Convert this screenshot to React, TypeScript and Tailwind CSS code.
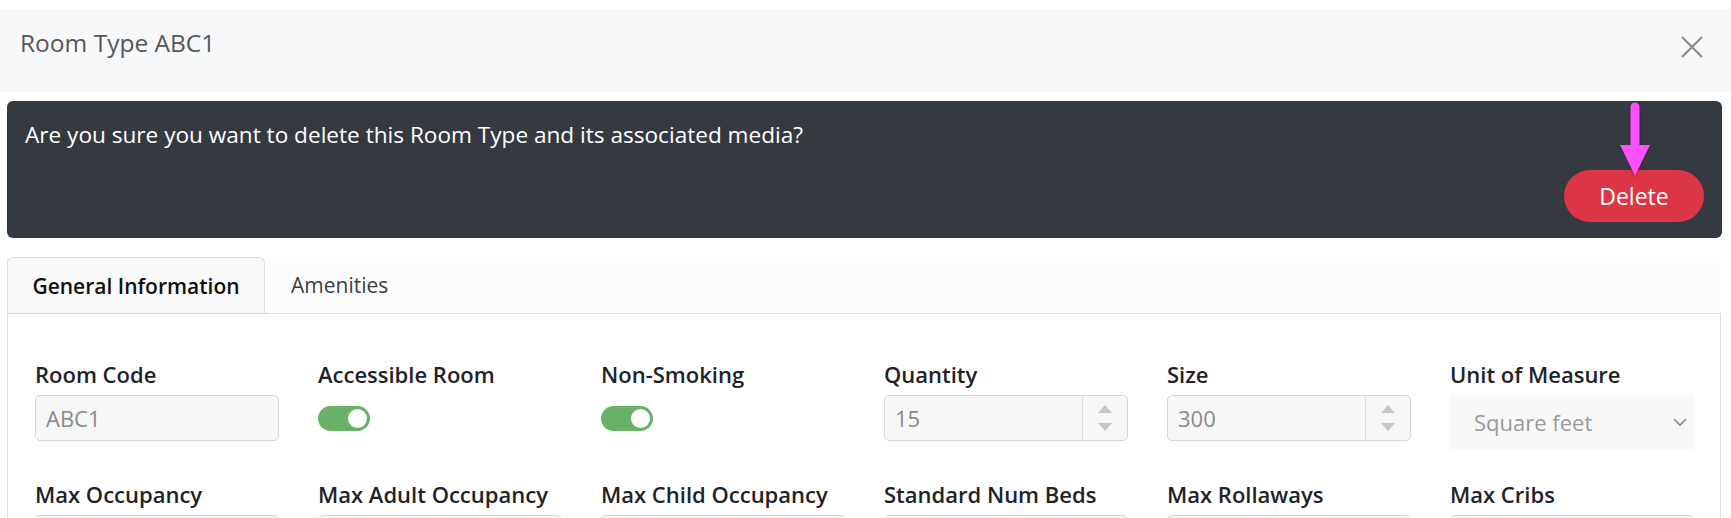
import React from "react";

const ROW1 = [
  { label: "Room Code", kind: "text", value: "ABC1" },
  { label: "Accessible Room", kind: "toggle" },
  { label: "Non-Smoking", kind: "toggle" },
  { label: "Quantity", kind: "number", value: "15" },
  { label: "Size", kind: "number", value: "300" },
  { label: "Unit of Measure", kind: "select", value: "Square feet" },
];

const ROW2 = [
  { label: "Max Occupancy", kind: "text", value: "" },
  { label: "Max Adult Occupancy", kind: "text", value: "" },
  { label: "Max Child Occupancy", kind: "text", value: "" },
  { label: "Standard Num Beds", kind: "text", value: "" },
  { label: "Max Rollaways", kind: "text", value: "" },
  { label: "Max Cribs", kind: "text", value: "" },
];

type Field = { label: string; kind: string; value?: string };

function Toggle() {
  return (
    <div className="h-[46px] pt-[11px]">
      <div className="w-[52px] h-[25px] rounded-full bg-[#67b267] flex items-center justify-end pr-[3px]">
        <div className="w-[19px] h-[19px] rounded-full bg-white" />
      </div>
    </div>
  );
}

function NumberInput({ value }: { value?: string }) {
  return (
    <div className="h-[46px] flex rounded-[5px] border border-[#d3d6da] bg-[#f7f7f7]">
      <div className="flex-1 flex items-center pl-[10px] text-[#8a8a8a]">{value}</div>
      <div className="w-[45px] border-l border-[#dcdfe2] flex flex-col items-center justify-center gap-[10px]">
        <svg width="14" height="8" viewBox="0 0 14 8"><path d="M7 0 L14 8 L0 8 Z" fill="#c4c6c8" /></svg>
        <svg width="14" height="8" viewBox="0 0 14 8"><path d="M0 0 L14 0 L7 8 Z" fill="#c4c6c8" /></svg>
      </div>
    </div>
  );
}

function SelectBox({ value }: { value?: string }) {
  // taller than the inputs; overflows into the row gap
  return (
    <div className="h-[46px]">
      <div className="h-[54px] flex items-center justify-between rounded-[5px] bg-[#f8f8f8] shadow-[0_0_2px_rgba(0,0,0,0.06)] pl-[24px] pr-[6px]">
        <span className="text-[#9a9a9a]">{value}</span>
        <svg width="16" height="10" viewBox="0 0 16 10" fill="none">
          <path d="M2 2 L8 8 L14 2" stroke="#8a8a8a" strokeWidth="1.6" />
        </svg>
      </div>
    </div>
  );
}

function FieldCell({ field }: { field: Field }) {
  return (
    <div className="flex flex-col">
      <label className="h-[30px] mb-[6px] font-semibold text-[#1f2328] whitespace-nowrap">{field.label}</label>
      {field.kind === "toggle" && <Toggle />}
      {field.kind === "number" && <NumberInput value={field.value} />}
      {field.kind === "select" && <SelectBox value={field.value} />}
      {field.kind === "text" && (
        <div className="h-[46px] flex items-center pl-[10px] rounded-[5px] border border-[#d3d6da] bg-[#f7f7f7] text-[#8a8a8a]">
          {field.value}
        </div>
      )}
    </div>
  );
}

export default function App() {
  return (
    <div className="w-[1731px] h-[518px] overflow-hidden bg-white font-['Open_Sans',sans-serif] text-[22px] leading-[30px] pt-[9px]">
      {/* Header */}
      <div className="h-[83px] bg-[#f7f8fa] flex items-start justify-between pl-[20px] pr-[28px] pt-[16px]">
        <h5 className="text-[24.5px] leading-[36px] text-[#575757]">Room Type ABC1</h5>
        <svg width="22" height="22" viewBox="0 0 22 22" className="mt-[11px]">
          <path d="M1 1 L21 21 M21 1 L1 21" stroke="#8c8c8c" strokeWidth="2.2" />
        </svg>
      </div>

      {/* Confirmation */}
      <div className="relative mt-[9px] ml-[7px] mr-[9px] h-[137px] rounded-[6px] bg-[#353a41] flex flex-col justify-between pl-[18px] pr-[18px] pt-[19px] pb-[16px]">
        <p className="text-white text-[22.6px]">Are you sure you want to delete this Room Type and its associated media?</p>
        <div className="flex justify-end">
          <button className="w-[140px] h-[52px] rounded-full bg-[#dc3545] text-white text-[23px]">Delete</button>
        </div>
        <svg className="absolute left-[1606px] top-[0px] drop-shadow-[0_1px_1px_rgba(0,0,0,0.35)]" width="44" height="80" viewBox="0 0 44 80">
          <path d="M22 6 L22 48" stroke="#fb50fb" strokeWidth="9" strokeLinecap="round" />
          <path d="M7 44 L37 44 L22 75 Z" fill="#fb50fb" />
        </svg>
      </div>

      {/* Tabs card */}
      <div className="mt-[19px] ml-[7px] mr-[10px]">
        <div className="flex border-b border-[#dadde2] bg-[#fcfcfc] h-[57px] text-[21px]">
          <div className="w-[258px] h-[56px] flex items-center justify-center rounded-t-[6px] border border-b-0 border-[#dadde2] bg-[#f9f9f9] font-semibold text-[#111]">
            General Information
          </div>
          <div className="px-[26px] flex items-center text-[#3c3c3c]">Amenities</div>
        </div>
        <div className="border-l border-r border-[#dadde2] pl-[27px] pr-[26px] pt-[45px] h-[300px]">
          <div className="grid grid-cols-6 gap-x-[39px] gap-y-[38px]">
            {ROW1.map((f) => <FieldCell key={f.label} field={f} />)}
            {ROW2.map((f) => <FieldCell key={f.label} field={f} />)}
          </div>
        </div>
      </div>
    </div>
  );
}
